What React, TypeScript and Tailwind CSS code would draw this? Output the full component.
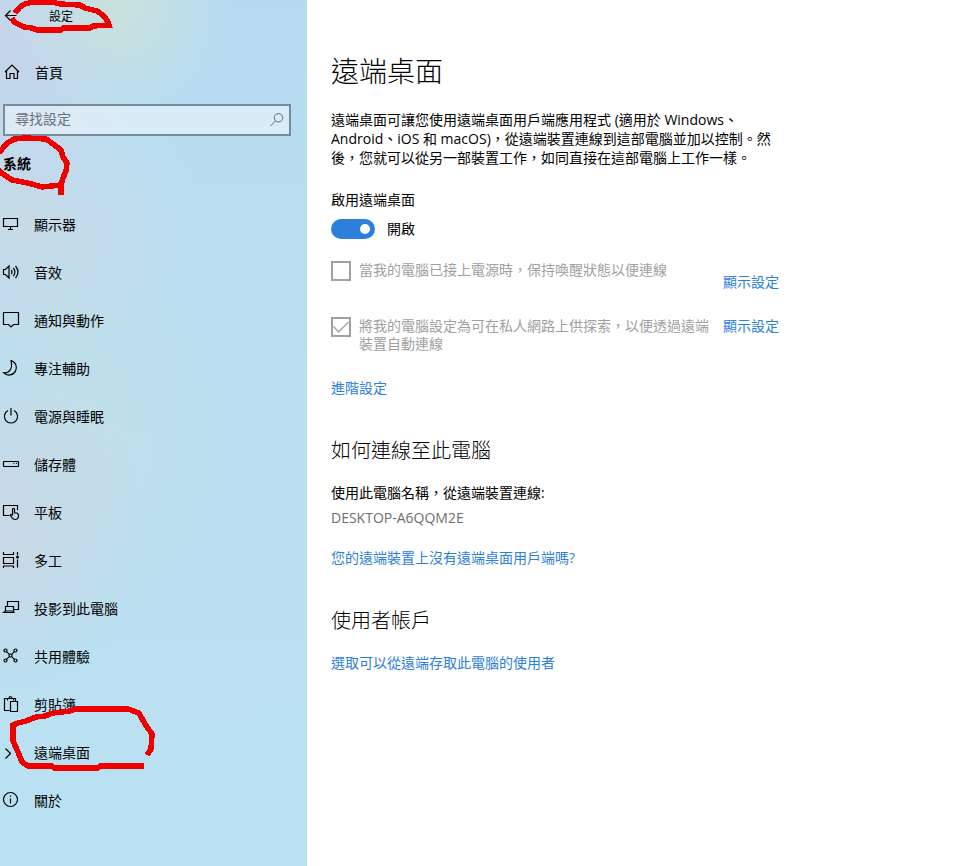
import type { ReactNode } from "react";

function Icon({ children }: { children: ReactNode }) {
  return (
    <svg
      className="size-[18px] shrink-0"
      viewBox="0 0 18 18"
      fill="none"
      stroke="#000"
      strokeWidth="1.2"
      aria-hidden="true"
    >
      {children}
    </svg>
  );
}

const navItems: { label: string; icon: ReactNode; current?: boolean }[] = [
  {
    label: "顯示器",
    icon: <path d="M1.5 3.5h14v8h-14zM8.5 11.5v3M6 14.5h5" />,
  },
  {
    label: "音效",
    icon: (
      <path d="M1.5 6.500h2l3.500-3.500v12l-3.500-3.500h-2zM9.200 6.800q1.600 2.200 0 4.400M11.300 4.800q3.200 4.200 0 8.400M13.500 3q5 6 0 12" />
    ),
  },
  {
    label: "通知與動作",
    icon: <path d="M1.5 1.5h15v12h-5l-2.5 2.5l-2.5-2.5h-5z" />,
  },
  {
    label: "專注輔助",
    icon: (
      <path d="M9 1.500a7.400 7.400 0 1 1-7.300 12.300c5 .6 9.600-3.800 7.300-12.300z" />
    ),
  },
  {
    label: "電源與睡眠",
    icon: <path d="M6 3.500a6.600 6.600 0 1 0 6 0M9 1v7.500" />,
  },
  {
    label: "儲存體",
    icon: (
      <>
        <rect x="1.5" y="6.5" width="15" height="5" rx="0.5" />
        <path d="M11.5 8.5h1M14 8.5h1" />
      </>
    ),
  },
  {
    label: "平板",
    icon: (
      <>
        <path d="M7.5 12.500h-6v-10h14v4.500" />
        <path d="M10.500 12.500v-6.200a1 1 0 0 1 2 0v3.700h1.500q2.800.2 2.500 3q-.3 3.500-3.300 3.500q-2.200 0-3.200-1.800l-1.800-2.700q.8-1.200 2.300.5" />
      </>
    ),
  },
  {
    label: "多工",
    icon: (
      <>
        <path d="M1.500 1v2.500h10v-2.500M1.500 6.500h10v6h-10zM1.500 17v-2h10v2M15.500 1v3M15.500 8.500v8" />
        <circle cx="15.5" cy="6" r="1.5" fill="#000" stroke="none" />
      </>
    ),
  },
  {
    label: "投影到此電腦",
    icon: (
      <path d="M5.500 7.500v-5h11v8h-5M3.500 7.500h8v4.500h-8zM3.500 12l-2 1.500h10.500l-.5-1.500" />
    ),
  },
  {
    label: "共用體驗",
    icon: (
      <>
        <circle cx="3.5" cy="3.5" r="1.5" />
        <circle cx="13.5" cy="3.5" r="1.5" />
        <circle cx="3.5" cy="13.5" r="1.5" />
        <circle cx="13.5" cy="13.5" r="1.5" />
        <circle cx="8.5" cy="8.5" r="1.5" />
        <path d="M4.600 4.600l2.800 2.800M12.400 4.600l-2.800 2.800M4.600 12.400l2.800-2.800M12.400 12.400l-2.800-2.800" />
      </>
    ),
  },
  {
    label: "剪貼簿",
    icon: (
      <path d="M7.500 15.500h-5v-12h11v3M5.500 5.500v-2h1.500q0-2 1.500-2t1.500 2h1.500v2M8.500 6.500h7v10h-7z" />
    ),
  },
  {
    label: "遠端桌面",
    icon: <path d="M3.5 5.500l5 5l-5 5" />,
    current: true,
  },
  {
    label: "關於",
    icon: (
      <>
        <circle cx="8.5" cy="8.5" r="7" />
        <path d="M8.5 7.500v5M8.500 4.500v1.300" />
      </>
    ),
  },
];

function TextLink({ children }: { children: ReactNode }) {
  return (
    <a href="#" className="text-[#2b80dc] hover:text-gray-500">
      {children}
    </a>
  );
}

function Sidebar() {
  return (
    <aside className="relative w-[307px] shrink-0 bg-[radial-gradient(ellipse_110px_110px_at_120px_10px,#c9e2dc_0%,transparent_100%),radial-gradient(ellipse_150px_170px_at_0px_40px,#c6d5eb_0%,transparent_100%),radial-gradient(ellipse_180px_150px_at_20px_220px,#c8dae6_0%,transparent_100%),radial-gradient(ellipse_150px_160px_at_0px_530px,#c9d7e5_0%,transparent_100%),radial-gradient(ellipse_150px_220px_at_80px_420px,#c2dfe8_0%,transparent_100%),linear-gradient(#b6dbf1,#badff0_50%,#bae1f3)] pb-10">
      <div className="flex h-8 items-center pl-1">
        <button type="button" aria-label="返回" className="w-[45px]">
          <svg className="size-[14px]" viewBox="0 0 14 14" fill="none" stroke="#000" strokeWidth="1.2" aria-hidden="true">
            <path d="M12.500 6.500h-11M6.500 1.500l-5 5l5 5" />
          </svg>
        </button>
        <span className="pt-0.5 text-xs">設定</span>
      </div>

      <a href="#" className="mt-4 flex h-12 items-center gap-[14px] pl-[3px]">
        <Icon>
          <path d="M2 9l7-7l7 7M3.500 7.500v8h3.500v-5h4v5h3.500v-8" />
        </Icon>
        <span className="pt-0.5">首頁</span>
      </a>

      <div className="relative mt-2 mr-4 ml-[3px]">
        <input
          type="search"
          aria-label="尋找設定"
          placeholder="尋找設定"
          className="block h-8 w-full border-2 border-[#758d9b] bg-white/45 pr-9 pb-1 pl-2.5 placeholder:text-[#66737b]"
        />
        <svg
          className="absolute top-2 right-1.5 size-4"
          viewBox="0 0 16 16"
          fill="none"
          stroke="#5f6f79"
          aria-hidden="true"
        >
          <circle cx="9.5" cy="5.800" r="4.200" />
          <path d="M6.500 9l-5 5" />
        </svg>
      </div>

      <h2 className="mt-2 mb-4 flex h-10 items-center pl-[3px] font-bold">系統</h2>

      <nav aria-label="系統">
        {navItems.map((item) => (
          <a
            key={item.label}
            href="#"
            aria-current={item.current ? "page" : undefined}
            className="flex h-12 items-center gap-[14px] pl-[2px]"
          >
            <Icon>{item.icon}</Icon>
            <span className="pt-0.5">{item.label}</span>
          </a>
        ))}
      </nav>

      <svg
        className="pointer-events-none absolute top-0 left-0 h-[780px] w-[160px]"
        viewBox="0 0 160 780"
        fill="none"
        stroke="#ee0000"
        strokeWidth="5.500"
        shapeRendering="crispEdges"
        aria-hidden="true"
      >
        <path d="M15 13L20 7L25 4L33 2L52 2L60 4L80 5L85 8L97 11L104 16L108 22L109 25L93 26L90 28L63 28L61 30L37 30L32 28L24 27L14 22L12 18" />
        <path d="M-1 153L6 144L14 139L25 138L46 139L53 144L61 150L63 157L67 163L66 171L63 178L61 185L61 195M61 185L42 187L28 183L12 180L3 174L-2 170" />
        <path d="M147 755L151 749L152 734L145 724L139 713L128 709L76 709L70 711L53 713L45 716L36 717L26 721L18 723L13 725L13 741L18 752L22 762L28 766L52 766L54 768L98 768L100 766L144 766" />
      </svg>
    </aside>
  );
}

export default function App() {
  return (
    <div
      lang="zh-Hant"
      className="flex min-h-screen bg-white font-['Open_Sans','Noto_Sans_CJK_TC',sans-serif] text-sm leading-[18px] text-black"
    >
      <Sidebar />
      <main className="min-w-0 flex-1 px-6 pt-[53px] pb-10">
        <div className="max-w-[448px]">
          <h1 className="text-[28px] leading-9 font-light">遠端桌面</h1>
          <p className="mt-[21px] max-w-[440px] leading-[19px]">
            遠端桌面可讓您使用遠端桌面用戶端應用程式 (適用於 Windows、Android、iOS 和
            macOS)，從遠端裝置連線到這部電腦並加以控制。然後，您就可以從另一部裝置工作，如同直接在這部電腦上工作一樣。
          </p>

          <h2 id="enable-label" className="mt-6">啟用遠端桌面</h2>
          <label className="mt-2.5 flex h-5 items-center gap-3">
            <input
              type="checkbox"
              role="switch"
              defaultChecked
              aria-labelledby="enable-label"
              className="flex h-5 w-11 appearance-none items-center rounded-full bg-gray-400 px-[5px] before:size-2.5 before:rounded-full before:bg-white checked:justify-end checked:bg-[#2b80dc]"
            />
            開啟
          </label>

          <div className="mt-[22px] flex items-start justify-between">
            <label className="flex gap-2 text-[#a0a0a0]">
              <input
                type="checkbox"
                disabled
                className="size-5 shrink-0 appearance-none border-2 border-[#a0a0a0]"
              />
              當我的電腦已接上電源時，保持喚醒狀態以便連線
            </label>
            <span className="mt-3 shrink-0"><TextLink>顯示設定</TextLink></span>
          </div>

          <div className="mt-[26px] flex items-start justify-between">
            <label className="flex max-w-[380px] gap-2 text-[#a0a0a0]">
              <span className="relative size-5 shrink-0">
                <input
                  type="checkbox"
                  disabled
                  defaultChecked
                  className="block size-5 appearance-none border-2 border-[#a0a0a0]"
                />
                <svg
                  className="absolute inset-0 size-5"
                  viewBox="0 0 20 20"
                  fill="none"
                  stroke="#a0a0a0"
                  strokeWidth="1.300"
                  aria-hidden="true"
                >
                  <path d="M2.500 9.500l5 5.500l10-10" />
                </svg>
              </span>
              將我的電腦設定為可在私人網路上供探索，以便透過遠端裝置自動連線
            </label>
            <span className="shrink-0"><TextLink>顯示設定</TextLink></span>
          </div>

          <p className="mt-[26px]"><TextLink>進階設定</TextLink></p>

          <h2 className="mt-10 text-xl leading-7 font-light">如何連線至此電腦</h2>
          <p className="mt-[19px]">使用此電腦名稱，從遠端裝置連線:</p>
          <p className="mt-[7px] text-[#6e6e6e]">DESKTOP-A6QQM2E</p>
          <p className="mt-[22px]"><TextLink>您的遠端裝置上沒有遠端桌面用戶端嗎?</TextLink></p>

          <h2 className="mt-10 text-xl leading-7 font-light">使用者帳戶</h2>
          <p className="mt-[19px]"><TextLink>選取可以從遠端存取此電腦的使用者</TextLink></p>
        </div>
      </main>
    </div>
  );
}
